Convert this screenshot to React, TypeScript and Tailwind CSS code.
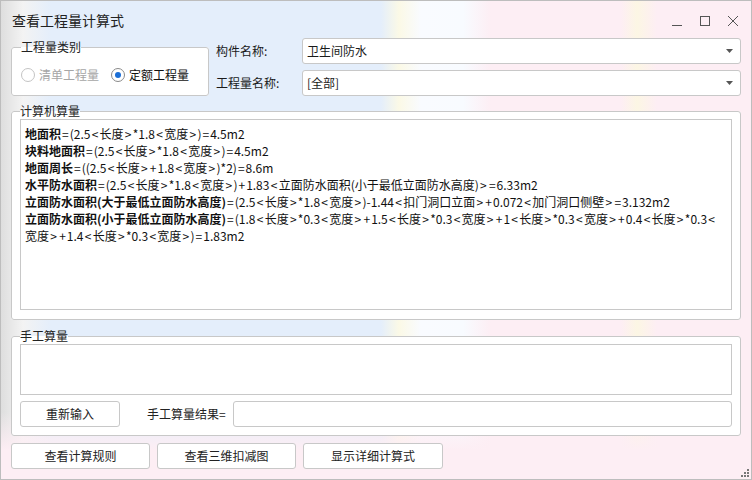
import React from 'react';

const lines: { b: string; t: string }[] = [
  { b: '地面积', t: '=(2.5<长度>*1.8<宽度>)=4.5m2' },
  { b: '块料地面积', t: '=(2.5<长度>*1.8<宽度>)=4.5m2' },
  { b: '地面周长', t: '=((2.5<长度>+1.8<宽度>)*2)=8.6m' },
  { b: '水平防水面积', t: '=(2.5<长度>*1.8<宽度>)+1.83<立面防水面积(小于最低立面防水高度)>=6.33m2' },
  { b: '立面防水面积(大于最低立面防水高度)', t: '=(2.5<长度>*1.8<宽度>)-1.44<扣门洞口立面>+0.072<加门洞口侧壁>=3.132m2' },
  { b: '立面防水面积(小于最低立面防水高度)', t: '=(1.8<长度>*0.3<宽度>+1.5<长度>*0.3<宽度>+1<长度>*0.3<宽度>+0.4<长度>*0.3<' },
  { b: '', t: '宽度>+1.4<长度>*0.3<宽度>)=1.83m2' },
];

// the dialog font draws < > = + with more room than Noto does
function Spaced({ text }: { text: string }) {
  const parts = text.split(/([<>=+])/);
  return (
    <>
      {parts.map((p, i) => {
        if (p === '<' || p === '>') return <span key={i} className="px-[1.25px]">{p}</span>;
        if (p === '=' || p === '+') return <span key={i} className="px-[1px]">{p}</span>;
        return <span key={i}>{p}</span>;
      })}
    </>
  );
}

function Combo({ value }: { value: string }) {
  return (
    <div className="flex-1 h-[26px] flex items-center justify-between bg-white border border-[#c8c8c8] rounded-[3px] pl-[4px] pr-[7px]">
      <span>{value}</span>
      <svg width="7" height="4" viewBox="0 0 7 4">
        <path d="M0 0h7L3.5 4z" fill="#555" />
      </svg>
    </div>
  );
}

function Radio({ label, checked, disabled }: { label: string; checked?: boolean; disabled?: boolean }) {
  return (
    <div className={`flex items-center gap-[4px] ${disabled ? 'text-[#a6a6a6]' : 'text-[#111]'}`}>
      <span className={`w-[14px] h-[14px] rounded-full border flex items-center justify-center bg-white ${disabled ? 'border-[#c4c4c4]' : 'border-[#8a8a8a]'}`}>
        {checked && <span className="w-[6px] h-[6px] rounded-full bg-[#1c6fd6]" />}
      </span>
      <span>{label}</span>
    </div>
  );
}

function Btn({ label, w }: { label: string; w: string }) {
  return (
    <button className={`${w} h-[26px] bg-white border border-[#c8c8c8] rounded-[3px] text-[#222] flex items-center justify-center`}>
      {label}
    </button>
  );
}

export default function App() {
  return (
    <div
      className="w-[752px] h-[480px] border border-[#bdbdbd] flex flex-col text-[12px] text-[#1a1a1a] overflow-hidden relative bg-[linear-gradient(180deg,transparent_0%,transparent_86%,#fdeef4_94%),linear-gradient(90deg,#dedede_0px,#f3f3f3_22px,#e4eefb_50px,#e4eefb_380px,#fbf9e6_398px,#f9fbff_420px,#f8fbff_462px,#fdeef4_490px,#fdeef4_620px,#fcf6e4_636px,#fdeef4_656px)]"
      style={{ fontFamily: '"Noto Sans CJK SC", "Noto Sans", sans-serif' }}
    >
      {/* title bar */}
      <div className="h-[36px] flex items-center justify-between pl-[11px] pr-[12px] pt-[3px]">
        <span className="text-[14px] text-[#222]">查看工程量计算式</span>
        <div className="flex items-center gap-[16px] text-[#444]">
          <svg width="12" height="12" viewBox="0 0 12 12"><path d="M1 10.5h10" stroke="#555" strokeWidth="1" /></svg>
          <svg width="12" height="12" viewBox="0 0 12 12"><rect x="1.5" y="1.5" width="9" height="9" fill="none" stroke="#555" strokeWidth="1" /></svg>
          <svg width="12" height="12" viewBox="0 0 12 12"><path d="M1 1l10 10M11 1L1 11" stroke="#555" strokeWidth="1" /></svg>
        </div>
      </div>

      <div className="flex-1 flex flex-col px-[10px]">
        {/* top */}
        <div className="flex gap-[7px] pt-[1px]">
          <fieldset className="w-[198px] h-[57px] mt-[1px] border border-[#c8c8c8] rounded-[3px] bg-white pl-[9px] pr-[2px] flex">
            <legend className="text-[#222] leading-[16px]">工程量类别</legend>
            <div className="flex items-center gap-[12px] -mt-[1px]">
              <Radio label="清单工程量" disabled />
              <Radio label="定额工程量" checked />
            </div>
          </fieldset>
          <div className="flex-1 flex flex-col gap-[6px]">
            <div className="flex items-center">
              <span className="w-[86px]">构件名称:</span>
              <Combo value="卫生间防水" />
            </div>
            <div className="flex items-center">
              <span className="w-[86px]">工程量名称:</span>
              <Combo value="[全部]" />
            </div>
          </div>
        </div>

        {/* computer */}
        <fieldset className="mt-[7px] h-[217px] border border-[#c8c8c8] rounded-[3px] bg-white px-[8px] flex flex-col">
          <legend className="text-[#222] leading-[16px]">计算机算量</legend>
          <div className="h-[191px] border border-[#c8c8c8] bg-white pl-[4px] pt-[5px] leading-[17px] text-[#111]">
            {lines.map((l, i) => (
              <div key={i} className="whitespace-nowrap">
                {l.b && <span className="font-bold">{l.b}</span>}
                <Spaced text={l.t} />
              </div>
            ))}
          </div>
        </fieldset>

        {/* manual */}
        <fieldset className="mt-[8px] h-[108px] border border-[#c8c8c8] rounded-[3px] bg-white px-[8px] pb-[8px] flex flex-col gap-[6px]">
          <legend className="text-[#222] leading-[16px]">手工算量</legend>
          <div className="h-[51px] border border-[#c8c8c8] bg-white" />
          <div className="flex items-center">
            <Btn label="重新输入" w="w-[100px]" />
            <span className="ml-[27px] w-[86px] text-[#222]">手工算量结果=</span>
            <div className="flex-1 h-[26px] border border-[#c8c8c8] rounded-[3px] bg-white" />
          </div>
        </fieldset>

        {/* bottom buttons */}
        <div className="mt-[7px] flex gap-[7px]">
          <Btn label="查看计算规则" w="w-[139px]" />
          <Btn label="查看三维扣减图" w="w-[139px]" />
          <Btn label="显示详细计算式" w="w-[140px]" />
        </div>
      </div>

      {/* resize grip */}
      <svg className="absolute right-[2px] bottom-[2px]" width="8" height="8" viewBox="0 0 8 8">
        <rect x="6" y="0" width="2" height="2" fill="#777" />
        <rect x="3" y="3" width="2" height="2" fill="#777" />
        <rect x="6" y="3" width="2" height="2" fill="#777" />
        <rect x="0" y="6" width="2" height="2" fill="#777" />
        <rect x="3" y="6" width="2" height="2" fill="#777" />
        <rect x="6" y="6" width="2" height="2" fill="#777" />
      </svg>
    </div>
  );
}
